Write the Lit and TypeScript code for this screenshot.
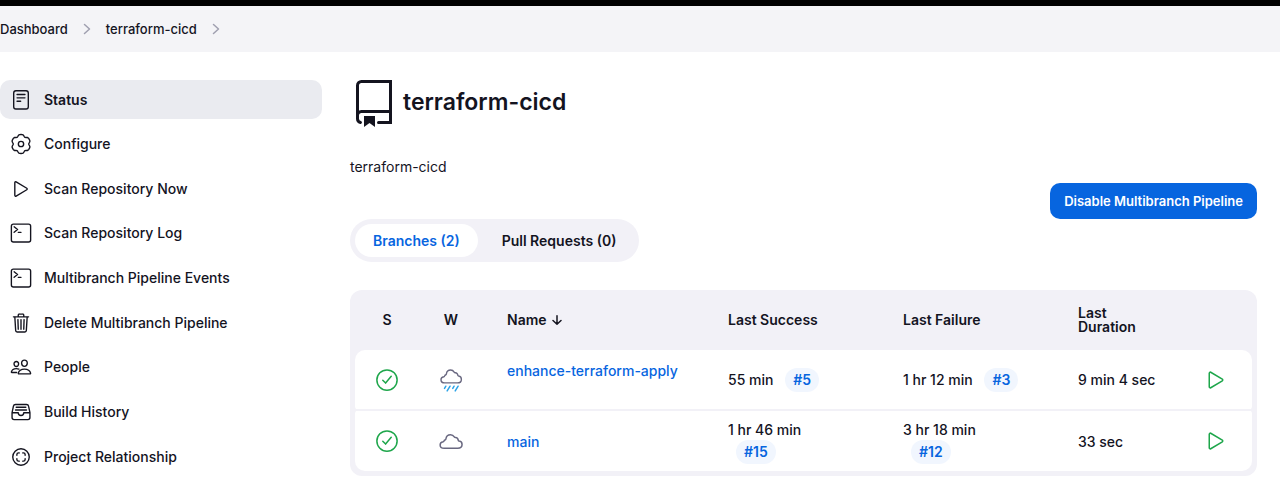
import { LitElement, html, css, svg } from "lit";
import { customElement } from "lit/decorators.js";

// Outline of a six-lobed cog centred on a 512 grid.
const cogOutline = () => {
  const points: string[] = [];
  for (let deg = 0; deg < 360; deg += 4) {
    const t = (deg * Math.PI) / 180;
    const wave = Math.cos(6 * t);
    const r = 206 + 20 * wave - 6 * Math.cos(12 * t);
    points.push(`${(256 + r * Math.sin(t)).toFixed(1)} ${(256 - r * Math.cos(t)).toFixed(1)}`);
  }
  return `M${points.join("L")}Z`;
};

const cloudPath = "M110 410h290c54 0 92-32 92-78 0-42-26-70-62-75-10-2-16-6-18-16-6-36-26-58-58-60-14-1-22-4-28-14-18-30-46-47-80-47-52 0-92 36-98 88-1 14-7 21-20 25-12 4-18 9-20 20-3 12-8 17-20 20-38 8-64 30-64 66 0 42 36 71 86 71z";

const icons: Record<string, unknown> = {
  status: svg`<rect x="86" y="40" width="340" height="424" rx="52"/><path d="M164 128h184M164 206h184M164 284h84"/>`,
  gear: svg`<path d="${cogOutline()}"/><circle cx="256" cy="256" r="62"/>`,
  play: svg`<path d="M112 111v290c0 17.44 17 28.52 31 20.16l247.9-148.37c12.12-7.25 12.12-26.33 0-33.58L143 90.84c-14-8.36-31 2.72-31 20.16z"/>`,
  terminal: svg`<rect x="32" y="48" width="448" height="416" rx="48"/><path d="M96 112l80 64-80 64M192 240h64"/>`,
  trash: svg`<path d="M112 112l20 320c.95 18.49 14.4 32 32 32h184c17.67 0 30.87-13.51 32-32l20-320M80 112h352M192 112V72a23.93 23.93 0 0124-24h80a23.93 23.93 0 0124 24v40M256 176v224M184 176l8 224M328 176l-8 224"/>`,
  people: svg`<path d="M402 168c-2.93 40.67-33.1 72-66 72s-63.12-31.32-66-72c-3-42.31 26.37-72 66-72s69 30.46 66 72zM336 304c-65.17 0-127.84 32.37-143.54 95.41-2.08 8.34 3.15 16.59 11.72 16.59h263.65c8.57 0 13.77-8.25 11.72-16.59C463.85 335.36 401.18 304 336 304zM200 185.94c-2.34 32.48-26.72 58.06-53 58.06s-50.7-25.57-53-58.06C91.61 152.15 115.34 128 147 128s55.39 24.77 53 57.94zM206 306c-18.05-8.27-37.93-11.45-59-11.45-52 0-102.1 25.85-114.65 76.2-1.65 6.66 2.53 13.25 9.37 13.25H154"/>`,
  tray: svg`<path d="M384 80H128c-26 0-43 14-48 40L48 272v112a48.14 48.14 0 0048 48h320a48.14 48.14 0 0048-48V272l-32-152c-5-27-23-40-48-40zM48 272h144M320 272h144M192 272a64 64 0 00128 0M144 144h224M128 208h256"/>`,
  relation: svg`<circle cx="256" cy="256" r="192"/><path d="M296 352h16a40 40 0 0040-40v-16M352 216v-16a40 40 0 00-40-40h-16M216 160h-16a40 40 0 00-40 40v16M160 296v16a40 40 0 0040 40h16"/>`,
  success: svg`<circle cx="256" cy="256" r="216"/><path d="M346 178L226 322l-60-60"/>`,
  cloud: svg`<path d="${cloudPath}"/>`,
  rain: svg`<path transform="translate(20 -72) scale(.93 .95)" d="${cloudPath}"/><path class="drops" d="M146 388l-28 46M236 388l-62 100M322 388l-28 46M408 388l-62 100"/>`,
};

const icon = (name: string, cls = "") =>
  html`<svg class="icon ${cls}" viewBox="0 0 512 512" aria-hidden="true">${icons[name]}</svg>`;

const chevron = html`<svg class="chevron" viewBox="0 0 8 12" aria-hidden="true"><path d="M1.5 1.5L6.5 6l-5 4.5"/></svg>`;

const tasks = [
  ["status", "Status"],
  ["gear", "Configure"],
  ["play", "Scan Repository Now"],
  ["terminal", "Scan Repository Log"],
  ["terminal", "Multibranch Pipeline Events"],
  ["trash", "Delete Multibranch Pipeline"],
  ["people", "People"],
  ["tray", "Build History"],
  ["relation", "Project Relationship"],
];

const branches = [
  { name: "enhance-terraform-apply", weather: "rain", ok: "55 min", okRun: "#5", bad: "1 hr 12 min", badRun: "#3", took: "9 min 4 sec", raised: true },
  { name: "main", weather: "cloud", ok: "1 hr 46 min", okRun: "#15", bad: "3 hr 18 min", badRun: "#12", took: "33 sec", raised: false },
];

@customElement("app-root")
export class AppRoot extends LitElement {
  static styles = css`
    :host {
      display: block;
      font: 500 14px/20px Inter, "Liberation Sans", sans-serif;
      color: #14141f;
      background: #fff;
    }
    * { box-sizing: border-box; }
    a { color: inherit; text-decoration: none; }
    button { font: inherit; border: 0; cursor: pointer; }
    .crumbs {
      display: flex;
      align-items: center;
      gap: 15px;
      height: 52px;
      border-top: 6px solid #000;
      background: #f4f4f7;
      font-size: 13px;
    }
    .chevron { width: 8px; height: 12px; fill: none; stroke: #a0a0b0; stroke-width: 1.5; stroke-linecap: round; stroke-linejoin: round; }
    .page {
      display: grid;
      grid-template-columns: 322px minmax(0, 1fr);
      gap: 28px;
      padding: 28px 23px 11px 0;
    }
    .tasks { display: flex; flex-direction: column; justify-content: space-between; }
    .task {
      display: flex;
      align-items: center;
      gap: 12px;
      height: 39px;
      padding: 0 10px;
      border-radius: 10px;
    }
    .task.current { background: #eaebf0; font-weight: 600; }
    .icon {
      display: block;
      width: 24px;
      height: 24px;
      fill: none;
      stroke: currentColor;
      stroke-width: 32;
      stroke-linecap: round;
      stroke-linejoin: round;
    }
    .task .icon { width: 22px; height: 22px; }
    .heading { display: flex; align-items: center; gap: 5px; height: 48px; }
    .book { width: 48px; height: 48px; fill: none; stroke: #14141f; stroke-width: 3; stroke-linecap: round; }
    .book .solid { fill: #14141f; stroke: none; }
    h1 { margin: 0; padding-bottom: 4px; font-size: 23px; line-height: 32px; font-weight: 600; }
    .about { margin: 29px 0 0; font-weight: 400; }
    .actions { display: flex; justify-content: flex-end; margin-top: 6px; }
    .primary {
      height: 36px;
      padding: 0 14px;
      border-radius: 10px;
      background: #0765df;
      color: #fff;
      font-size: 13px;
      font-weight: 600;
    }
    .tabs {
      display: inline-flex;
      gap: 6px;
      padding: 5px;
      border-radius: 22px;
      background: #f2f1f7;
    }
    .tab {
      height: 33px;
      padding: 0 18px;
      border-radius: 17px;
      background: transparent;
      color: inherit;
      font-weight: 600;
    }
    .tab.selected { background: #fff; }
    .tab.selected, .link { color: #0765df; }
    .panel {
      margin-top: 28px;
      padding: 0 5px 5px;
      border-radius: 12px;
      background: #f2f1f7;
    }
    table { width: 100%; border-collapse: collapse; table-layout: fixed; }
    th, td { padding: 0 28px 0 24px; text-align: left; white-space: nowrap; }
    th { height: 60px; line-height: 14px; font-weight: 600; }
    td { height: 60px; background: #fff; line-height: 21px; }
    .narrow { width: 64px; padding: 0; text-align: center; }
    .time { width: 175px; }
    .length { width: 126px; }
    .run { width: 72px; padding: 0; }
    th.length, td.time { white-space: normal; }
    .when, .build { white-space: nowrap; }
    .branch + .branch td { height: 61px; border-top: 2px solid #f2f1f7; }
    .branch:first-child td:first-child { border-radius: 10px 0 0 4px; }
    .branch:first-child td:last-child { border-radius: 0 10px 4px 0; }
    .branch:last-child td:first-child { border-radius: 4px 0 0 10px; }
    .branch:last-child td:last-child { border-radius: 0 4px 10px 0; }
    .raised { padding-bottom: 19px; }
    .centered { margin: 0 auto; }
    .green { color: #1ea64b; }
    .grey { color: #696880; }
    .drops { stroke: #2ba3e8; }
    .build {
      display: inline-block;
      margin-left: 8px;
      padding: 2px 8px;
      border-radius: 12px;
      background: #f1f6fe;
      color: #0765df;
      line-height: 20px;
      font-weight: 600;
    }
    .start { display: block; margin: 0 auto; padding: 0; background: transparent; }
    .sort { display: inline-block; width: 10px; height: 10px; margin-left: 2px; fill: none; stroke: currentColor; stroke-width: 1.5; stroke-linecap: round; stroke-linejoin: round; }
  `;

  render() {
    return html`
      <nav class="crumbs" aria-label="Breadcrumb">
        <a href="#">Dashboard</a>${chevron}<a href="#">terraform-cicd</a>${chevron}
      </nav>
      <div class="page">
        <nav class="tasks" aria-label="Tasks">
          ${tasks.map(([glyph, label], i) => html`<a class="task ${i === 0 ? "current" : ""}" href="#">${icon(glyph)}<span>${label}</span></a>`)}
        </nav>
        <main>
          <div class="heading">
            <svg class="book" viewBox="0 0 48 48" aria-hidden="true">
              <path d="M10.5 42.5a4 4 0 01-3-4V5.5a4 4 0 014-4h29v41h-12M7.5 36a4 4 0 014-4.500h29"/>
              <path class="solid" d="M14 36h11v11l-5.500-4-5.500 4z"/>
            </svg>
            <h1>terraform-cicd</h1>
          </div>
          <p class="about">terraform-cicd</p>
          <div class="actions"><button class="primary">Disable Multibranch Pipeline</button></div>
          <div class="tabs" role="tablist">
            <button class="tab selected" role="tab" aria-selected="true">Branches (2)</button>
            <button class="tab" role="tab" aria-selected="false">Pull Requests (0)</button>
          </div>
          <div class="panel">
            <table>
              <thead>
                <tr>
                  <th class="narrow">S</th>
                  <th class="narrow">W</th>
                  <th>Name <svg class="sort" viewBox="0 0 10 10" aria-hidden="true"><path d="M5 .8v8.400M1 5.500l4 3.700 4-3.700"/></svg></th>
                  <th class="time">Last Success</th>
                  <th class="time">Last Failure</th>
                  <th class="length">Last Duration</th>
                  <th class="run"></th>
                </tr>
              </thead>
              <tbody>
                ${branches.map((b) => html`
                  <tr class="branch">
                    <td class="narrow">${icon("success", "centered green")}</td>
                    <td class="narrow">${icon(b.weather, "centered grey")}</td>
                    <td class=${b.raised ? "raised" : ""}><a class="link" href="#">${b.name}</a></td>
                    <td class="time"><span class="when">${b.ok}</span> <a class="build" href="#">${b.okRun}</a></td>
                    <td class="time"><span class="when">${b.bad}</span> <a class="build" href="#">${b.badRun}</a></td>
                    <td class="length">${b.took}</td>
                    <td class="run"><button class="start green" aria-label="Build ${b.name}">${icon("play")}</button></td>
                  </tr>`)}
              </tbody>
            </table>
          </div>
        </main>
      </div>
    `;
  }
}
